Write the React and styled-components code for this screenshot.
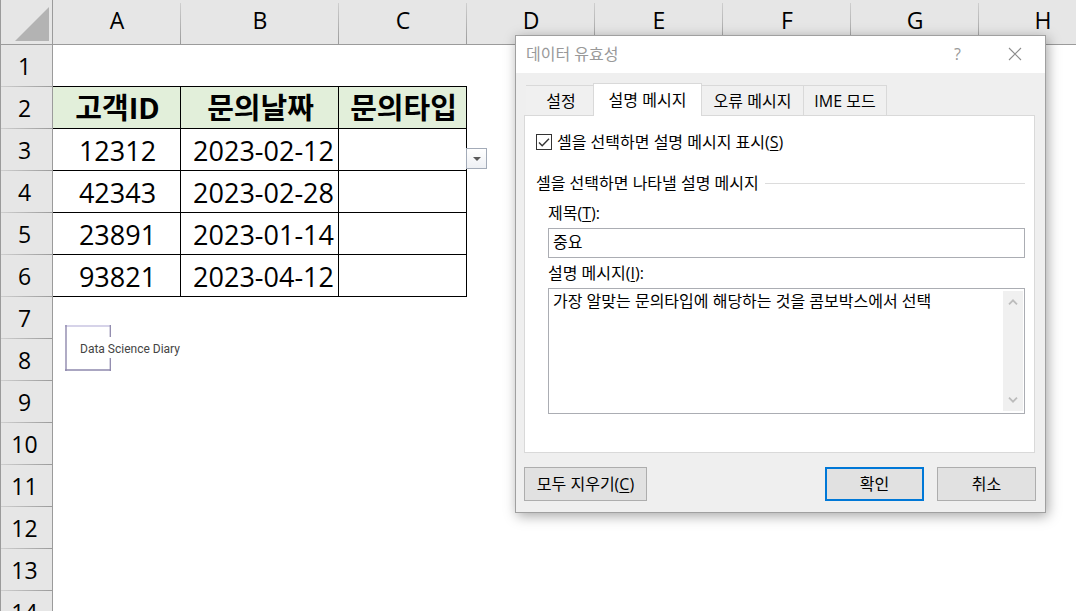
import React, { useState } from 'react'
import styled, { createGlobalStyle } from 'styled-components';

const columns = ['A', 'B', 'C', 'D', 'E', 'F', 'G', 'H'];
const rowCount = 14;

const sheet = {
  2: ['고객ID', '문의날짜', '문의타입'],
  3: ['12312', '2023-02-12', ''],
  4: ['42343', '2023-02-28', ''],
  5: ['23891', '2023-01-14', ''],
  6: ['93821', '2023-04-12', ''],
};

const tabs = [
  { name: '설정', width: 68 },
  { name: '설명 메시지', width: 108 },
  { name: '오류 메시지', width: 102 },
  { name: 'IME 모드', width: 83 },
];

export default function App() {
  return (
    <>
      <GlobalStyle />
      <Workspace>
        <Sheet />
        <ValidationDialog />
      </Workspace>
    </>
  )
}

function Sheet() {
  const rows = Array.from({ length: rowCount }, (_, i) => i + 1);
  return (
    <Grid>
      <colgroup>
        <Col $width={53} />
        {columns.map((name) => <Col key={name} $width={name === 'B' ? 158 : 128} />)}
      </colgroup>
      <thead>
        <tr>
          <Corner>
            <svg width="34" height="34" viewBox="0 0 34 34" aria-hidden="true">
              <path d="M34 0V34H0Z" fill="#b3b3b3" />
            </svg>
          </Corner>
          {columns.map((name) => <ColumnHead key={name} scope="col">{name}</ColumnHead>)}
        </tr>
      </thead>
      <tbody>
        {rows.map((row) => (
          <tr key={row}>
            <RowHead scope="row">{row}</RowHead>
            {columns.map((name, i) => {
              const filled = i < 3 && sheet[row];
              if (!filled) {
                return (
                  <Cell key={name} $topEdge={row === 1 && i < 3}>
                    {row === 7 && i === 0 && <Logo />}
                  </Cell>
                )
              }
              return (
                <DataCell key={name} $title={row === 2} $date={row > 2 && i === 1}>
                  {sheet[row][i]}
                  {row === 3 && i === 2 && (
                    <ListButton aria-label="목록">
                      <svg width="8" height="4" viewBox="0 0 8 4"><path d="M0 0H8L4 4Z" fill="#5a5a5a" /></svg>
                    </ListButton>
                  )}
                </DataCell>
              )
            })}
          </tr>
        ))}
      </tbody>
    </Grid>
  )
}

function Logo() {
  return (
    <LogoBox>
      <svg width="46" height="46" viewBox="0 0 46 46" aria-hidden="true">
        <path d="M0 1H46" stroke="#c9c5e2" strokeWidth="1.4" />
        <path d="M1 0V46M0 45H46" stroke="#8f89ad" strokeWidth="1.4" fill="none" />
        <path d="M45.3 0V12M45.3 33V46" stroke="#8f89ad" strokeWidth="1.3" />
      </svg>
      <LogoText>Data Science Diary</LogoText>
    </LogoBox>
  )
}

function ValidationDialog() {
  const [active, setActive] = useState(1);
  const [show, setShow] = useState(true);
  const [title, setTitle] = useState('중요');
  const [message, setMessage] = useState('가장 알맞는 문의타입에 해당하는 것을 콤보박스에서 선택');

  return (
    <Dialog role="dialog" aria-labelledby="dialog-title">
      <TitleBar>
        <Title id="dialog-title">데이터 유효성</Title>
        <TitleButton aria-label="도움말">?</TitleButton>
        <TitleButton aria-label="닫기">
          <svg width="14" height="14" viewBox="0 0 14 14"><path d="M1 1L13 13M13 1L1 13" stroke="#8c8c8c" strokeWidth="1.1" /></svg>
        </TitleButton>
      </TitleBar>
      <Body>
        <TabList role="tablist">
          {tabs.map((tab, i) => (
            <Tab key={tab.name} role="tab" aria-selected={active === i} $width={tab.width} $active={active === i} onClick={() => setActive(i)}>
              {tab.name}
            </Tab>
          ))}
        </TabList>
        <Panel>
          <CheckRow>
            <CheckBox type="checkbox" checked={show} onChange={() => setShow(!show)} />
            <span>셀을 선택하면 설명 메시지 표시(<u>S</u>)</span>
          </CheckRow>
          <GroupTitle>셀을 선택하면 나타낼 설명 메시지</GroupTitle>
          <Fields>
            <Label htmlFor="msg-title">제목(<u>T</u>):</Label>
            <TextInput id="msg-title" value={title} onChange={(e) => setTitle(e.target.value)} />
            <Label htmlFor="msg-text">설명 메시지(<u>I</u>):</Label>
            <MessageBox>
              <TextArea id="msg-text" value={message} onChange={(e) => setMessage(e.target.value)} />
              <ScrollBar>
                <svg width="10" height="6" viewBox="0 0 10 6"><path d="M1 5.3L5 1.3L9 5.3" fill="none" stroke="#bcbcbc" strokeWidth="1.8" /></svg>
                <svg width="10" height="6" viewBox="0 0 10 6"><path d="M1 0.7L5 4.7L9 0.7" fill="none" stroke="#bcbcbc" strokeWidth="1.8" /></svg>
              </ScrollBar>
            </MessageBox>
          </Fields>
        </Panel>
        <Footer>
          <ClearButton>모두 지우기(<u>C</u>)</ClearButton>
          <Button $primary>확인</Button>
          <Button>취소</Button>
        </Footer>
      </Body>
    </Dialog>
  )
}

const GlobalStyle = createGlobalStyle`
  * {
    box-sizing: border-box;
  }
  body {
    margin: 0;
    background: #fff;
    color: #000;
    font-family: "Open Sans", "Noto Sans CJK KR", sans-serif;
    font-size: 16px;
  }
  button, input, textarea {
    font: inherit;
    color: inherit;
  }
  u {
    text-underline-offset: 2px;
    text-decoration-thickness: 1px;
  }
`;

const Workspace = styled.div`
  position: relative;
  height: 100vh;
  overflow: hidden;
`;

const Grid = styled.table`
  table-layout: fixed;
  width: max-content;
  border-collapse: separate;
  border-spacing: 0;
  text-align: center;
`;

const Col = styled.col`
  width: ${({ $width }) => $width}px;
`;

const HeadCell = styled.th`
  padding: 0;
  font-size: 23px;
  line-height: 36px;
  font-weight: 400;
  background-color: #e6e6e6;
`;

const Corner = styled(HeadCell)`
  height: 45px;
  padding: 7px 3px 3px 0;
  vertical-align: top;
  border-left: 1px solid #9b9b9b;
  border-right: 1px solid #9b9b9b;
  border-bottom: 1px solid #9b9b9b;

  svg {
    display: block;
    margin-left: auto;
  }
`;

const ColumnHead = styled(HeadCell)`
  height: 45px;
  padding-bottom: 4px;
  border-bottom: 1px solid #9b9b9b;
  background-image: linear-gradient(#cfcfcf, #9b9b9b);
  background-size: 1px 41px;
  background-position: right 0 top 3px;
  background-repeat: no-repeat;
`;

const RowHead = styled(HeadCell)`
  height: 42px;
  padding-right: 4px;
  border-left: 1px solid #9b9b9b;
  border-right: 1px solid #9b9b9b;
  background-image: linear-gradient(to right, #cfcfcf, #9b9b9b);
  background-size: 100% 1px;
  background-position: left bottom;
  background-repeat: no-repeat;
`;

const Cell = styled.td`
  position: relative;
  height: 42px;
  padding: 0;
  border-bottom: 1px solid ${({ $topEdge }) => ($topEdge ? '#000' : 'transparent')};
`;

const DataCell = styled(Cell)`
  padding: ${({ $title }) => ($title ? '1px 0 0 2px' : '3px 0 0 2px')};
  font-size: ${({ $title }) => ($title ? 29 : 27)}px;
  line-height: 36px;
  font-weight: ${({ $title }) => ($title ? 700 : 400)};
  background: ${({ $title }) => ($title ? '#e2efda' : '#fff')};
  border-right: 1px solid #000;
  border-bottom-color: #000;
  white-space: nowrap;
  ${({ $date }) => $date && 'padding-right: 4px; text-align: right;'}
`;

const ListButton = styled.button`
  position: absolute;
  left: 100%;
  bottom: 1px;
  display: flex;
  align-items: center;
  justify-content: center;
  width: 21px;
  height: 21px;
  padding: 0;
  border: 1px solid #a3abb8;
  background: linear-gradient(#fff, #eef0f4);
`;

const LogoBox = styled.div`
  position: absolute;
  top: 28px;
  left: 12px;
  display: flex;
  align-items: center;

  svg {
    display: block;
  }
`;

const LogoText = styled.span`
  margin-left: -31px;
  padding-top: 2px;
  font-family: Roboto, sans-serif;
  font-size: 12px;
  line-height: 16px;
  color: #444;
  white-space: nowrap;
`;

const Dialog = styled.section`
  position: absolute;
  top: 35px;
  left: 515px;
  width: 531px;
  background: #efefef;
  border: 1px solid #a0a0a0;
  box-shadow: 2px 3px 12px rgba(0, 0, 0, 0.35);
`;

const TitleBar = styled.header`
  display: flex;
  align-items: center;
  height: 37px;
  padding: 0 2px 0 10px;
  background: #fff;
  color: #999;
`;

const Title = styled.h1`
  flex: 1;
  margin: 0;
  padding-bottom: 3px;
  font-size: 16px;
  font-weight: 400;
`;

const TitleButton = styled.button`
  display: flex;
  align-items: center;
  justify-content: center;
  width: 57px;
  height: 37px;
  padding: 0 0 1px;
  border: 0;
  background: none;
`;

const Body = styled.div`
  padding: 10px 9px 11px 8px;
`;

const TabList = styled.div`
  display: flex;
  align-items: flex-end;
  padding-left: 2px;
`;

const Tab = styled.button`
  min-width: ${({ $width }) => $width}px;
  height: ${({ $active }) => ($active ? 33 : 30)}px;
  margin-bottom: ${({ $active }) => ($active ? -1 : 0)}px;
  padding: 0 0 2px;
  border: 1px solid #d9d9d9;
  border-width: 1px 1px 0 0;
  background: ${({ $active }) => ($active ? '#fff' : '#f0f0f0')};
  white-space: nowrap;
  ${({ $active }) => $active && 'position: relative;'}

  &:first-child {
    padding-left: 3px;
  }
  &:nth-child(2) {
    box-shadow: -1px 0 0 #d9d9d9;
  }
`;

const Panel = styled.div`
  margin-right: 1px;
  padding: 16px 9px 38px 11px;
  border: 1px solid #d9d9d9;
  background: #fff;
  line-height: 20px;
`;

const CheckRow = styled.label`
  display: flex;
  align-items: center;
  gap: 5px;
`;

const CheckBox = styled.input`
  appearance: none;
  width: 16px;
  height: 16px;
  margin: 0;
  border: 1px solid #333;
  background: #fff;

  &:checked {
    background: #fff url("data:image/svg+xml,%3Csvg xmlns='http://www.w3.org/2000/svg' viewBox='0 0 14 14'%3E%3Cpath d='M2 7.5L5.2 10.7L12 3.8' fill='none' stroke='%23333' stroke-width='1.4'/%3E%3C/svg%3E") center / 14px 14px no-repeat;
  }
`;

const GroupTitle = styled.h2`
  display: flex;
  align-items: center;
  gap: 6px;
  margin: 21px 0 10px;
  font-size: 16px;
  font-weight: 400;

  &::after {
    content: '';
    flex: 1;
    height: 1px;
    background: #dcdcdc;
  }
`;

const Fields = styled.div`
  display: flex;
  flex-direction: column;
  padding-left: 12px;
`;

const Label = styled.label`
  margin-bottom: 5px;
`;

const TextInput = styled.input`
  height: 30px;
  margin-bottom: 5px;
  padding: 0 4px 5px;
  border: 1px solid #abadb3;
  background: #fff;
`;

const MessageBox = styled.div`
  display: flex;
  height: 126px;
  padding: 2px 1px 2px 0;
  border: 1px solid #abadb3;
`;

const TextArea = styled.textarea`
  flex: 1;
  min-width: 0;
  padding: 0 4px;
  border: 0;
  outline: 0;
  resize: none;
  overflow: hidden;
  background: none;
  line-height: 20px;
`;

const ScrollBar = styled.div`
  display: flex;
  flex-direction: column;
  align-items: center;
  justify-content: space-between;
  width: 20px;
  padding: 8px 0;
  background: #f0f0f0;
`;

const Footer = styled.footer`
  display: flex;
  gap: 13px;
  margin-top: 14px;
`;

const Button = styled.button`
  width: 99px;
  height: 34px;
  padding: 0 0 2px;
  border: ${({ $primary }) => ($primary ? '2px solid #0078d7' : '1px solid #adadad')};
  background: #e1e1e1;
`;

const ClearButton = styled(Button)`
  width: 123px;
  margin-right: auto;
`;
